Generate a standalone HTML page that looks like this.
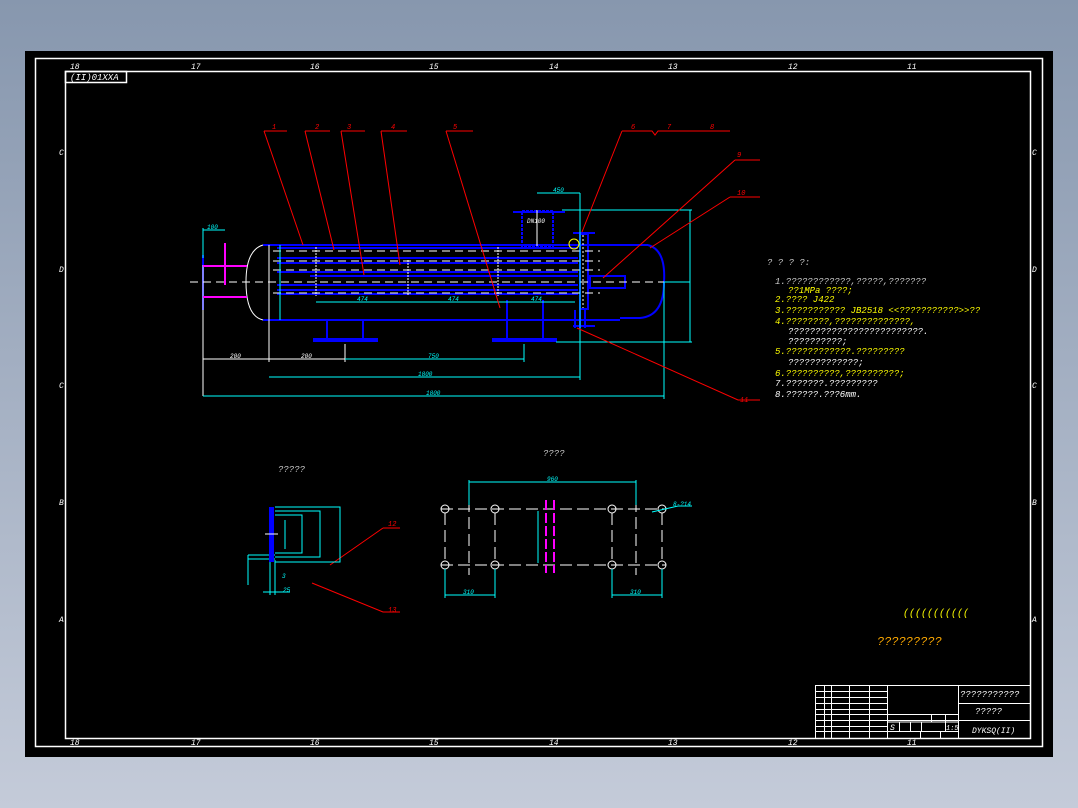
<!DOCTYPE html>
<html><head><meta charset="utf-8"><style>
html,body{margin:0;padding:0;width:1078px;height:808px;overflow:hidden;background:linear-gradient(#8797ae,#c4cbd9);}
svg{position:absolute;left:0;top:0}
text{font-family:"Liberation Mono",monospace;font-style:italic}
</style></head><body>
<svg width="1078" height="808" viewBox="0 0 1078 808">
<rect x="25" y="51" width="1028" height="706" fill="#000"/>
<g fill="none" stroke="#fff" stroke-width="1.5">
<rect x="35.5" y="58.5" width="1007" height="688"/>
<rect x="65.5" y="71.5" width="965" height="667"/>
<rect x="65.5" y="71.5" width="61" height="11"/>
</g>
<g fill="#fff" font-size="8" stroke="none">
<text x="70" y="80" font-size="9">(II)01XXA</text>
<text x="70" y="69">18</text><text x="191" y="69">17</text><text x="310" y="69">16</text><text x="429" y="69">15</text><text x="549" y="69">14</text><text x="668" y="69">13</text><text x="788" y="69">12</text><text x="907" y="69">11</text>
<text x="70" y="745">18</text><text x="191" y="745">17</text><text x="310" y="745">16</text><text x="429" y="745">15</text><text x="549" y="745">14</text><text x="668" y="745">13</text><text x="788" y="745">12</text><text x="907" y="745">11</text>
<text x="59" y="155">C</text><text x="59" y="272">D</text><text x="59" y="388">C</text><text x="59" y="505">B</text><text x="59" y="622">A</text>
<text x="1032" y="155">C</text><text x="1032" y="272">D</text><text x="1032" y="388">C</text><text x="1032" y="505">B</text><text x="1032" y="622">A</text>
</g>
<!-- main drawing -->
<g fill="none" stroke="#00f" stroke-width="2">
<line x1="263" y1="245" x2="648" y2="245"/><line x1="263" y1="320" x2="620" y2="320"/>
<path d="M648 245 Q666 250 664 282 Q664 316 640 318 L620 318"/>
<line x1="277" y1="248" x2="578" y2="248"/><line x1="277" y1="258" x2="578" y2="258"/><line x1="277" y1="263" x2="578" y2="263"/><line x1="277" y1="272" x2="578" y2="272"/><line x1="310" y1="276" x2="578" y2="276"/><line x1="277" y1="285" x2="578" y2="285"/><line x1="277" y1="290" x2="578" y2="290"/><line x1="277" y1="294" x2="578" y2="294"/>
<rect x="580" y="234" width="8" height="75"/>
<line x1="327" y1="320" x2="327" y2="340"/><line x1="363" y1="320" x2="363" y2="340"/><rect x="314" y="339" width="63" height="2"/>
<line x1="507" y1="300" x2="507" y2="340"/><line x1="543" y1="300" x2="543" y2="340"/><rect x="493" y="339" width="63" height="2"/>
<rect x="522" y="211" width="31" height="35" stroke-dasharray="3 1"/><line x1="513" y1="212" x2="565" y2="212"/>
<rect x="590" y="276" width="35" height="12"/>
<line x1="203" y1="255" x2="203" y2="310"/>
<line x1="575" y1="310" x2="575" y2="328"/><line x1="580" y1="310" x2="580" y2="328"/><line x1="585" y1="310" x2="585" y2="328"/>
<line x1="573" y1="233" x2="595" y2="233"/><line x1="573" y1="326" x2="595" y2="326"/>
</g>
<g stroke="#fff" stroke-width="1" fill="none">
<path d="M263 245 Q246 250 246 282 Q246 316 263 320"/>
<line x1="269" y1="245" x2="269" y2="362"/>
<g stroke-dasharray="8 5"><line x1="190" y1="282" x2="675" y2="282"/><line x1="273" y1="251" x2="600" y2="251"/><line x1="273" y1="261" x2="600" y2="261"/><line x1="273" y1="270" x2="600" y2="270"/><line x1="273" y1="293" x2="600" y2="293"/></g>
<line x1="316" y1="247" x2="316" y2="296" stroke-dasharray="2 1"/><line x1="408" y1="260" x2="408" y2="296" stroke-dasharray="2 1"/><line x1="498" y1="247" x2="498" y2="296" stroke-dasharray="2 1"/>
<line x1="583" y1="235" x2="583" y2="308" stroke-dasharray="2 2"/>
<line x1="203" y1="359" x2="345" y2="359"/><line x1="203" y1="265" x2="203" y2="396"/>
<line x1="345" y1="344" x2="345" y2="362"/><line x1="537" y1="210" x2="537" y2="246"/>
</g>
<g stroke="#f0f" stroke-width="2" fill="none"><line x1="203" y1="266" x2="247" y2="266"/><line x1="203" y1="297" x2="247" y2="297"/><line x1="225" y1="243" x2="225" y2="285"/></g>
<g stroke="#0ff" stroke-width="1" fill="none">
<line x1="203" y1="230" x2="225" y2="230"/><line x1="203" y1="228" x2="203" y2="258"/>
<line x1="280" y1="245" x2="280" y2="320"/>
<line x1="537" y1="193" x2="580" y2="193"/><line x1="580" y1="193" x2="580" y2="343"/>
<line x1="562" y1="210" x2="692" y2="210"/><line x1="556" y1="342" x2="692" y2="342"/><line x1="690" y1="210" x2="690" y2="342"/><line x1="664" y1="282" x2="690" y2="282"/>
<line x1="316" y1="302" x2="575" y2="302"/>
<line x1="345" y1="359" x2="524" y2="359"/><line x1="524" y1="344" x2="524" y2="362"/>
<line x1="269" y1="377" x2="580" y2="377"/><line x1="580" y1="340" x2="580" y2="380"/>
<line x1="203" y1="396" x2="664" y2="396"/><line x1="664" y1="282" x2="664" y2="399"/>
</g>
<g fill="#0ff" font-size="6"><text x="207" y="229">100</text><text x="553" y="192">450</text><text x="357" y="301">474</text><text x="448" y="301">474</text><text x="531" y="301">474</text><text x="230" y="358" fill="#fff">200</text><text x="301" y="358" fill="#fff">200</text><text x="428" y="358">750</text><text x="418" y="376">1800</text><text x="426" y="395">1800</text><text x="527" y="223" fill="#fff">DN100</text></g>
<circle cx="574" cy="244" r="5" stroke="#ff0" fill="none"/>
<!-- leaders -->
<g stroke="#f00" stroke-width="1" fill="none">
<path d="M264 131H287M264 131L303 245"/><path d="M305 131H330M305 131L334 250"/><path d="M341 131H365M341 131L364 275"/><path d="M381 131H407M381 131L400 265"/><path d="M446 131H473M446 131L500 308"/>
<path d="M622 131H652L655 135L658 131H730M622 131L582 232"/>
<path d="M735 160H760M735 160L603 278"/><path d="M730 197H760M730 197L650 248"/><path d="M577 328L738 400H760"/>
<path d="M383 528H400M383 528L330 565"/><path d="M312 583L383 612H400"/>
</g>
<g fill="#f00" font-size="7"><text x="272" y="129">1</text><text x="315" y="129">2</text><text x="347" y="129">3</text><text x="391" y="129">4</text><text x="453" y="129">5</text><text x="631" y="129">6</text><text x="667" y="129">7</text><text x="710" y="129">8</text><text x="737" y="157">9</text><text x="737" y="195">10</text><text x="740" y="402">11</text><text x="388" y="526" font-style="normal">12</text><text x="388" y="612" font-style="normal">13</text></g>
<!-- notes -->
<g font-size="9" fill="#fff">
<text x="767" y="265" fill="#ccc">? ? ? ?:</text>
<text x="775" y="284" fill="#ccc">1.????????????,?????,???????</text>
<text x="788" y="293" fill="#ff0">??1MPa         ????;</text>
<text x="775" y="302" fill="#ff0">2.????  J422</text>
<text x="775" y="313" fill="#ff0">3.??????????? JB2518      &lt;&lt;???????????&gt;&gt;??</text>
<text x="775" y="324" fill="#ff0">4.????????,??????????????,</text>
<text x="788" y="334">?????????????????????????.</text>
<text x="788" y="344">??????????;</text>
<text x="775" y="354" fill="#ff0">5.????????????.?????????</text>
<text x="788" y="365">?????????????;</text>
<text x="775" y="376" fill="#ff0">6.??????????,??????????;</text>
<text x="775" y="386">7.???????.?????????</text>
<text x="775" y="397">8.??????.???6mm.</text>
<text x="278" y="472" fill="#ccc">?????</text>
<text x="543" y="456" fill="#ccc">????</text>
<text x="903" y="616" fill="#ff0" font-size="10">(((((((((((</text>
<text x="877" y="645" fill="#fa0" font-size="12">?????????</text>
</g>
<!-- flange detail -->
<g stroke="#0ff" stroke-width="1" fill="none">
<path d="M275 507H340V562H275M275 511H320V557H275M275 515H302V553H275M285 520V549"/>
<path d="M248 555H275M248 559H275M248 555V585M270 560V595M275 560V595M263 592H290"/>
</g>
<rect x="269" y="507" width="5" height="55" fill="#00f"/>
<line x1="265" y1="534" x2="278" y2="534" stroke="#fff"/>
<g fill="#0ff" font-size="6"><text x="283" y="592">25</text><text x="282" y="578">3</text></g>
<!-- bolt pattern -->
<g stroke="#fff" stroke-width="1" fill="none">
<circle cx="445" cy="509" r="4"/><circle cx="495" cy="509" r="4"/><circle cx="612" cy="509" r="4"/><circle cx="662" cy="509" r="4"/>
<circle cx="445" cy="565" r="4"/><circle cx="495" cy="565" r="4"/><circle cx="612" cy="565" r="4"/><circle cx="662" cy="565" r="4"/>
<g stroke-dasharray="12 5"><line x1="441" y1="509" x2="666" y2="509"/><line x1="441" y1="565" x2="666" y2="565"/><line x1="445" y1="513" x2="445" y2="561"/><line x1="495" y1="513" x2="495" y2="561"/><line x1="612" y1="513" x2="612" y2="561"/><line x1="662" y1="513" x2="662" y2="561"/><line x1="469" y1="500" x2="469" y2="575"/><line x1="636" y1="500" x2="636" y2="575"/></g>
</g>
<g stroke="#0ff" fill="none"><path d="M469 482H636M469 480V505M636 480V505M538 511V563M445 595H495M612 595H662M445 569V598M495 569V598M612 569V598M662 569V598M652 512L678 506H692"/></g>
<g stroke="#f0f" stroke-width="2"><line x1="546" y1="500" x2="546" y2="573" stroke-dasharray="10 3"/><line x1="554" y1="500" x2="554" y2="573" stroke-dasharray="10 3"/></g>
<g fill="#0ff" font-size="6"><text x="547" y="481">960</text><text x="463" y="594">310</text><text x="630" y="594">310</text><text x="673" y="506">8-?14</text></g>
<!-- title block -->
<g stroke="#fff" stroke-width="1" fill="none">
<rect x="815.5" y="685.5" width="215" height="53"/>
<line x1="958.5" y1="685" x2="958.5" y2="739"/><line x1="887.5" y1="685" x2="887.5" y2="739"/>
<line x1="958" y1="703.5" x2="1030" y2="703.5"/><line x1="958" y1="720.5" x2="1030" y2="720.5"/>
<path d="M815 691.5H887M815 697.5H887M815 703.5H887M815 709.5H887M815 714.5H958M815 720.5H958M815 726.5H887M815 731.5H958"/>
<path d="M824.5 685V739M831.5 685V739M849.5 685V739M869.5 685V714M869.5 714V739M887 722H958M899.5 722V731M910.5 722V731M921.5 722V731M945.5 714V731M931.5 714V722M920.5 731V739M940.5 731V739"/>
</g>
<g fill="#fff" font-size="9"><text x="960" y="697">???????????</text><text x="975" y="714">?????</text><text x="972" y="733" font-size="8">DYKSQ(II)</text><text x="946" y="730" font-size="7" font-style="normal">1:5</text><text x="890" y="730" font-size="8">S</text></g>
</svg>
</body></html>
